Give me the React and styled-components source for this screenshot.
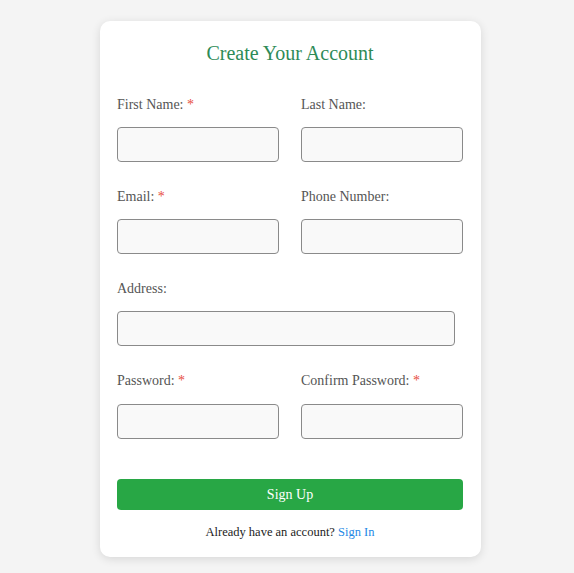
import styled, { createGlobalStyle } from "styled-components";

const GlobalStyle = createGlobalStyle`
  body {
    margin: 0;
    background-color: #f4f4f4;
    font-family: "Liberation Serif", "Times New Roman", serif;
  }
`;

const Page = styled.div`
  display: flex;
  justify-content: center;
  padding: 21px 0 16px 7px;
`;

const Card = styled.div`
  width: 381px;
  box-sizing: border-box;
  background-color: #fff;
  border-radius: 10px;
  box-shadow: 0 2px 10px rgba(0, 0, 0, 0.12);
  padding: 20px 18px 16px 17px;
`;

const Title = styled.h2`
  margin: 0 0 30px;
  text-align: center;
  font-size: 20px;
  line-height: 25px;
  font-weight: normal;
  color: #2e8b57;
`;

const Row = styled.div`
  display: flex;
  gap: 22px;
  margin-bottom: ${(p) => p.mb || 26}px;
`;

const Field = styled.div`
  display: flex;
  flex-direction: column;
  min-width: 0;
  flex: ${(p) => (p.full ? "0 0 338px" : "1 1 0")};
`;

const Label = styled.label`
  font-size: 14px;
  line-height: 18px;
  color: #555;
  margin-bottom: ${(p) => p.gap || 13}px;
`;

const Star = styled.span`
  color: #e74c3c;
`;

const Input = styled.input`
  width: 100%;
  min-width: 0;
  height: 35px;
  box-sizing: border-box;
  border: 1px solid #8a8a8a;
  border-radius: 4px;
  background-color: #f9f9f9;
  outline: none;
`;

const Button = styled.button`
  display: block;
  width: 100%;
  height: 31px;
  border: 0;
  border-radius: 4px;
  background-color: #28a745;
  color: #fff;
  font-family: inherit;
  font-size: 14px;
  cursor: pointer;
`;

const Footer = styled.p`
  margin: 13px 0 0;
  text-align: center;
  font-size: 12.5px;
  line-height: 18px;
  color: #222;
`;

const Link = styled.a`
  color: #1e88e5;
  text-decoration: none;
`;

export default function App() {
  return (
    <>
      <GlobalStyle />
      <Page>
        <Card>
          <Title>Create Your Account</Title>
          <Row>
            <Field>
              <Label>
                First Name: <Star>*</Star>
              </Label>
              <Input />
            </Field>
            <Field>
              <Label>Last Name:</Label>
              <Input />
            </Field>
          </Row>
          <Row>
            <Field>
              <Label>
                Email: <Star>*</Star>
              </Label>
              <Input />
            </Field>
            <Field>
              <Label>Phone Number:</Label>
              <Input />
            </Field>
          </Row>
          <Row>
            <Field full>
              <Label>Address:</Label>
              <Input />
            </Field>
          </Row>
          <Row mb={40}>
            <Field>
              <Label gap={14}>
                Password: <Star>*</Star>
              </Label>
              <Input />
            </Field>
            <Field>
              <Label gap={14}>
                Confirm Password: <Star>*</Star>
              </Label>
              <Input />
            </Field>
          </Row>
          <Button>Sign Up</Button>
          <Footer>
            Already have an account? <Link href="#">Sign In</Link>
          </Footer>
        </Card>
      </Page>
    </>
  );
}
